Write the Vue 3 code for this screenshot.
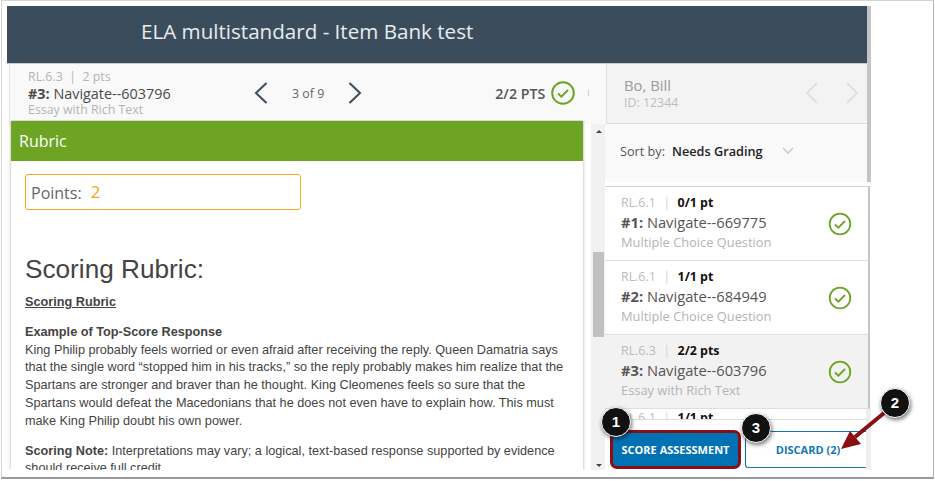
<script setup>
const items = [
  { std: 'RL.6.1', pts: '0/1 pt', num: '#1:', name: 'Navigate--669775', kind: 'Multiple Choice Question' },
  { std: 'RL.6.1', pts: '1/1 pt', num: '#2:', name: 'Navigate--684949', kind: 'Multiple Choice Question' },
  { std: 'RL.6.3', pts: '2/2 pts', num: '#3:', name: 'Navigate--603796', kind: 'Essay with Rich Text', active: true },
]
</script>

<template>
  <div class="shot">
    <div class="page">
      <header class="title-bar">ELA multistandard - Item Bank test</header>

      <div class="toolbar">
        <div class="question">
          <div class="question__info">
            <div class="muted">RL.6.3 &nbsp;|&nbsp; 2 pts</div>
            <div class="question__name"><b>#3:</b> Navigate--603796</div>
            <div class="muted">Essay with Rich Text</div>
          </div>
          <div class="pager">
            <svg width="16" height="24" viewBox="0 0 16 24"><path d="M13.5 2 3 12l10.5 10" fill="none" stroke="#3b4d5c" stroke-width="2" /></svg>
            <span class="pager__text">3 of 9</span>
            <svg width="16" height="24" viewBox="0 0 16 24"><path d="M2.5 2 13 12 2.5 22" fill="none" stroke="#3b4d5c" stroke-width="2" /></svg>
          </div>
          <div class="score">
            <span>2/2 PTS</span>
            <svg width="24" height="24" viewBox="0 0 24 24"><circle cx="12" cy="12" r="10.8" fill="none" stroke="#6da424" stroke-width="2" /><path d="m7 12.5 3.4 3.2L17 9" fill="none" stroke="#6da424" stroke-width="2" /></svg>
          </div>
          <span class="tick"></span>
        </div>
        <div class="student">
          <div>
            <div class="student__name">Bo, Bill</div>
            <div class="student__id">ID: 12344</div>
          </div>
          <div class="student__nav">
            <svg width="14" height="24" viewBox="0 0 14 24"><path d="M12 2 2 12l10 10" fill="none" stroke="#dcdcdc" stroke-width="1.6" /></svg>
            <svg width="14" height="24" viewBox="0 0 14 24"><path d="m2 2 10 10L2 22" fill="none" stroke="#dcdcdc" stroke-width="1.6" /></svg>
          </div>
        </div>
      </div>

      <div class="main">
        <section class="rubric">
          <div class="rubric__head">Rubric</div>
          <div class="points"><span>Points:</span><em>2</em></div>
          <h2>Scoring Rubric:</h2>
          <p class="rubric__sub"><b><u>Scoring Rubric</u></b></p>
          <p>
            <b>Example of Top-Score Response</b><br />
            King Philip probably feels worried or even afraid after receiving the reply. Queen Damatria says
            that the single word “stopped him in his tracks,” so the reply probably makes him realize that the
            Spartans are stronger and braver than he thought. King Cleomenes feels so sure that the
            Spartans would defeat the Macedonians that he does not even have to explain how. This must
            make King Philip doubt his own power.
          </p>
          <p>
            <b>Scoring Note:</b> Interpretations may vary; a logical, text-based response supported by evidence
            should receive full credit
          </p>
        </section>

        <div class="gutter">
          <span class="gutter__up"></span>
          <span class="gutter__thumb"></span>
          <span class="gutter__down"></span>
        </div>

        <aside class="side">
          <div class="sort">
            <span class="sort__label">Sort by:</span>
            <b>Needs Grading</b>
            <svg width="12" height="8" viewBox="0 0 12 8"><path d="m1 1 5 5 5-5" fill="none" stroke="#c4c4c4" stroke-width="1.3" /></svg>
          </div>
          <div class="list">
            <div v-for="item in items" :key="item.num" class="item" :class="{ 'item--active': item.active }">
              <div class="item__text">
                <div class="item__top"><span class="item__std">{{ item.std }}</span><i>|</i><b>{{ item.pts }}</b></div>
                <div class="item__name"><b>{{ item.num }}</b> {{ item.name }}</div>
                <div class="item__kind">{{ item.kind }}</div>
              </div>
              <svg width="24" height="24" viewBox="0 0 24 24"><circle cx="12" cy="12" r="10.3" fill="none" stroke="#6da424" stroke-width="1.8" /><path d="m7 12.5 3.4 3.2L17 9" fill="none" stroke="#6da424" stroke-width="1.8" /></svg>
            </div>
            <div class="item item--cut">
              <div class="item__top"><span class="item__std">RL.6.1</span><i>|</i><b>1/1 pt</b></div>
            </div>
          </div>
          <div class="actions">
            <button class="btn btn--score">SCORE ASSESSMENT</button>
            <button class="btn btn--discard">DISCARD (2)</button>
          </div>
        </aside>
      </div>
    </div>

    <!-- screenshot annotations -->
    <svg class="arrow" width="935" height="481" viewBox="0 0 935 481">
      <path d="M884 413 855 437" stroke="#8b0f12" stroke-width="4" fill="none" />
      <path d="m841 449 9-18 11 13z" fill="#8b0f12" />
    </svg>
    <span class="badge badge--one">1</span>
    <span class="badge badge--two">2</span>
    <span class="badge badge--three">3</span>
  </div>
</template>

<style scoped>
.shot {
  position: relative;
  box-sizing: border-box;
  width: 933px;
  height: 479px;
  margin-left: 1px;
  padding: 5px 0 7px 5px;
  background: #fff;
  border: 1px solid #d4d4d4;
  border-bottom: 2px solid #9a9a9a;
  border-right: 1px solid #b4b4b4;
  overflow: hidden;
  font-family: "Open Sans", sans-serif;
  color: #444;
}

.page {
  width: 864px;
  height: 464px;
  display: flex;
  flex-direction: column;
}

.title-bar {
  height: 58px;
  flex: none;
  box-sizing: border-box;
  padding: 11px 0 0 134px;
  background: #3b4d5c;
  color: #e8ecef;
  font-size: 20.6px;
  line-height: 28px;
  border-bottom: 1px solid #c8c8c8;
  border-right: 4px solid #c4c4c4;
}

.toolbar {
  height: 60px;
  flex: none;
  display: flex;
  padding-left: 2px;
  border-right: 4px solid #c4c4c4;
}

.question {
  width: 598px;
  flex: none;
  display: flex;
  align-items: center;
  box-sizing: border-box;
  padding: 0 0 2px 18px;
  background: #f9f9f9;
  border-left: 1px solid #e2e2e2;
  border-right: 1px solid #dedede;
}

.question__info {
  width: 225px;
  font-size: 12.4px;
  line-height: 16px;
}

.muted {
  color: #b4b4b4;
}

.question__name {
  font-size: 14.4px;
  line-height: 17px;
  color: #4a4a4a;
}

.pager {
  display: flex;
  align-items: center;
  gap: 23px;
}

.pager__text {
  font-size: 12.4px;
  color: #666;
}

.score {
  display: flex;
  align-items: center;
  gap: 6px;
  margin-left: 132px;
  font-size: 14.2px;
  font-weight: 600;
  color: #555;
}

.tick {
  width: 1px;
  height: 6px;
  margin-left: 13px;
  background: #b4d4ea;
}

.student {
  flex: 1;
  display: flex;
  justify-content: space-between;
  align-items: center;
  box-sizing: border-box;
  padding: 0 8px 1px 17px;
  background: #f3f3f3;
  border-bottom: 1px solid #dcdcdc;
}

.student__name {
  font-size: 14.8px;
  line-height: 20px;
  color: #9a9a9a;
}

.student__id {
  font-size: 12.4px;
  line-height: 16px;
  color: #bdbdbd;
}

.student__nav {
  display: flex;
  gap: 26px;
}

.main {
  flex: 1;
  min-height: 0;
  margin-top: -4px;
  display: flex;
  overflow: hidden;
}

.rubric {
  width: 572px;
  flex: none;
  margin: 1px 0 0 4px;
  background: #fff;
  box-shadow: 0 0 3px #aaa;
  font-family: "Liberation Sans", Arial, sans-serif;
  font-size: 12.7px;
  line-height: 17.8px;
  color: #444;
  overflow: hidden;
}

.rubric__head {
  height: 40px;
  box-sizing: border-box;
  padding: 0 8px;
  background: #6da424;
  color: #fff;
  font-family: "Open Sans", sans-serif;
  font-size: 16px;
  line-height: 40px;
}

.points {
  box-sizing: border-box;
  width: 276px;
  height: 36px;
  margin: 13px 0 0 14px;
  padding: 3px 0 0 5px;
  display: flex;
  align-items: center;
  gap: 9px;
  border: 1px solid #f5a81c;
  border-radius: 3px;
  font-family: "Open Sans", sans-serif;
  font-size: 16px;
  color: #666;
}

.points em {
  font-style: normal;
  font-size: 17px;
  color: #f5a81c;
  margin-bottom: 4px;
}

.rubric h2 {
  margin: 44px 0 0 14px;
  font-size: 26.2px;
  line-height: 30px;
  font-weight: 400;
  color: #444;
}

.rubric p {
  margin: 12px 0 0 14px;
  width: 545px;
}

.rubric .rubric__sub {
  margin-top: 10px;
}

.gutter {
  position: relative;
  width: 14px;
  flex: none;
  box-sizing: border-box;
  margin: 4px 0 0 8px;
  padding: 128px 1px 0 2px;
  background: #f1f1f1;
  display: flex;
  flex-direction: column;
}

.gutter__thumb {
  height: 85px;
  background: #c1c1c1;
}

.gutter__up,
.gutter__down {
  position: absolute;
  left: 5px;
  width: 0;
  height: 0;
  border-left: 3px solid transparent;
  border-right: 3px solid transparent;
}

.gutter__up {
  top: 6px;
  border-bottom: 3px solid #444;
}

.gutter__down {
  bottom: 3px;
  border-top: 3px solid #444;
}

.side {
  width: 266px;
  flex: none;
  margin-top: 4px;
  background: #c4c4c4;
  display: flex;
  flex-direction: column;
}

.sort {
  height: 58px;
  flex: none;
  display: flex;
  align-items: center;
  box-sizing: border-box;
  margin-right: 4px;
  padding: 0 0 4px 15px;
  background: #f9f9f9;
  font-size: 12.7px;
  color: #555;
}

.sort b {
  margin-left: 7px;
  font-weight: 600;
  color: #222;
}

.sort svg {
  margin-left: 19px;
}

.list {
  height: 238px;
  flex: none;
  box-sizing: border-box;
  margin: 0 0 0 -1px;
  padding-top: 4px;
  overflow: hidden;
  background: #fff;
}

.item {
  height: 74px;
  box-sizing: border-box;
  display: flex;
  align-items: center;
  justify-content: space-between;
  padding: 0 16px 2px 17px;
  background: #fff;
  border-bottom: 1px solid #dedede;
  border-right: 2px solid #c4c4c4;
  margin-right: 1px;
}

.item svg {
  margin-top: 2px;
}

.item:first-child {
  height: 75px;
  border-top: 1px solid #d4d4d4;
}

.item--active {
  background: #f2f2f2;
}

.item--cut {
  height: 11px;
  align-items: flex-start;
  overflow: hidden;
  margin-right: 0;
  padding-bottom: 0;
  border-right: 5px solid #eee;
}

.item__top {
  display: flex;
  align-items: center;
  gap: 7.5px;
  font-size: 12.4px;
  line-height: 18px;
  color: #bbb;
}

.item__top i {
  font-style: normal;
  color: #c6d6e2;
}

.item__top b {
  color: #111;
}

.item__name {
  font-size: 14.7px;
  line-height: 21px;
  color: #555;
}

.item__kind {
  font-size: 12.85px;
  line-height: 18px;
  color: #b4b4b4;
}

.actions {
  flex: 1;
  display: flex;
  box-sizing: border-box;
  gap: 5px;
  padding: 11px 0 0 6px;
  background: #fff;
  border-right: 5px solid #eee;
}

.btn {
  height: 37px;
  box-sizing: border-box;
  font-family: "Open Sans", sans-serif;
  font-size: 11px;
  font-weight: 700;
  padding: 0;
}

.btn--score {
  width: 131px;
  height: 39px;
  margin: -1px -1px 0 -1px;
  flex: none;
  background: #0072b4;
  color: #fff;
  border: 3px solid #8b0f12;
  border-radius: 7px;
}

.btn--discard {
  flex: 1;
  padding-left: 4px;
  background: #fff;
  color: #1278b4;
  border: 1px solid #0f74b0;
  border-right: none;
  border-radius: 3px 0 0 3px;
}

.arrow {
  position: absolute;
  left: -2px;
  top: -1px;
  pointer-events: none;
}

.badge {
  position: absolute;
  width: 28px;
  height: 28px;
  border-radius: 50%;
  background: #111;
  border: 1px solid #fff;
  box-shadow: 1px 2px 4px rgba(0, 0, 0, 0.55);
  color: #fff;
  font-family: "Liberation Sans", Arial, sans-serif;
  font-size: 15px;
  font-weight: 700;
  line-height: 28px;
  text-align: center;
}

.badge--one {
  left: 599px;
  top: 406px;
}

.badge--two {
  left: 878px;
  top: 387px;
}

.badge--three {
  left: 739px;
  top: 412px;
}
</style>
